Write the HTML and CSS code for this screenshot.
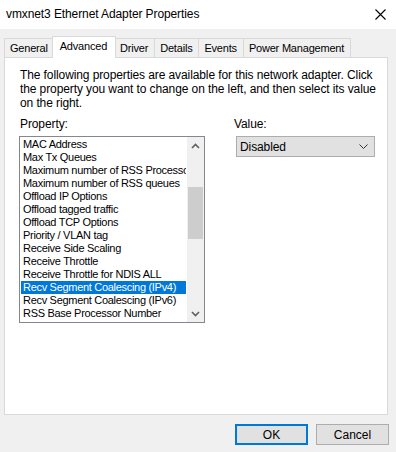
FILE: index.html
```html
<!DOCTYPE html>
<html lang="en">

<head>
    <meta charset="UTF-8">
    <meta name="viewport" content="width=device-width, initial-scale=1.0">
    <title>vmxnet3 Ethernet Adapter Properties</title>
    <link rel="stylesheet" href="styles.css">
</head>

<body>
    <div class="window">
        <div class="titlebar">
            <span class="title">vmxnet3 Ethernet Adapter Properties</span>
            <svg class="close" width="11" height="11" viewBox="0 0 11 11">
                <path d="M0.5 0.5 L10.5 10.5 M10.5 0.5 L0.5 10.5" stroke="#000" stroke-width="1.1" fill="none" />
            </svg>
        </div>

        <div class="tabs">
            <div class="tab">General</div>
            <div class="tab active">Advanced</div>
            <div class="tab">Driver</div>
            <div class="tab">Details</div>
            <div class="tab">Events</div>
            <div class="tab">Power Management</div>
        </div>

        <div class="panel">
            <p class="intro">
                The following properties are available for this network adapter. Click<br>
                the property you want to change on the left, and then select its value<br>
                on the right.
            </p>

            <div class="fields">
                <div class="field">
                    <div class="label">Property:</div>
                    <div class="listbox">
                        <ul class="items">
                            <li>MAC Address</li>
                            <li>Max Tx Queues</li>
                            <li>Maximum number of RSS Processors</li>
                            <li>Maximum number of RSS queues</li>
                            <li>Offload IP Options</li>
                            <li>Offload tagged traffic</li>
                            <li>Offload TCP Options</li>
                            <li>Priority / VLAN tag</li>
                            <li>Receive Side Scaling</li>
                            <li>Receive Throttle</li>
                            <li>Receive Throttle for NDIS ALL</li>
                            <li class="selected">Recv Segment Coalescing (IPv4)</li>
                            <li>Recv Segment Coalescing (IPv6)</li>
                            <li>RSS Base Processor Number</li>
                        </ul>
                        <div class="scrollbar">
                            <div class="arrow">
                                <svg width="9" height="6" viewBox="0 0 9 6">
                                    <path d="M1 5 L4.5 1.5 L8 5" stroke="#606060" stroke-width="1.6" fill="none" />
                                </svg>
                            </div>
                            <div class="track">
                                <div class="thumb"></div>
                            </div>
                            <div class="arrow">
                                <svg width="9" height="6" viewBox="0 0 9 6">
                                    <path d="M1 1 L4.5 4.5 L8 1" stroke="#606060" stroke-width="1.6" fill="none" />
                                </svg>
                            </div>
                        </div>
                    </div>
                </div>

                <div class="field">
                    <div class="label">Value:</div>
                    <div class="combo">
                        <span>Disabled</span>
                        <svg width="9" height="5" viewBox="0 0 9 5">
                            <path d="M0.5 0.5 L4.5 4.5 L8.5 0.5" stroke="#333" stroke-width="1" fill="none" />
                        </svg>
                    </div>
                </div>
            </div>
        </div>

        <div class="buttons">
            <button class="btn default">OK</button>
            <button class="btn">Cancel</button>
        </div>
    </div>
</body>

</html>
```

FILE: styles.css
```css
body {
    margin: 0;
    background-color: #f0f0f0;
    font-family: "Liberation Sans", Arial, sans-serif;
    font-size: 12px;
    letter-spacing: -0.1px;
    color: #000;
}

.window {
    width: 396px;
    height: 452px;
    overflow: hidden;
}

.titlebar {
    height: 29px;
    background-color: #fff;
    display: flex;
    align-items: center;
    justify-content: space-between;
    padding: 0 10px 0 6px;
}

.title {
    padding-bottom: 1px;
}

.tabs {
    display: flex;
    align-items: flex-end;
    padding: 7px 0 0 4px;
    height: 21px;
}

.tab {
    height: 18px;
    line-height: 19px;
    padding: 0 6px 0 5px;
    border: 1px solid #d9d9d9;
    border-bottom: none;
    margin-right: -1px;
    background-color: #f0f0f0;
    font-size: 11px;
    letter-spacing: -0.2px;
}

.tab.active {
    position: relative;
    z-index: 1;
    height: 21px;
    line-height: 18px;
    margin: 0 -2px -1px -2px;
    padding: 0 8px 0 7px;
    background-color: #fff;
}

.panel {
    margin-left: 4px;
    width: 367px;
    height: 346px;
    border: 1px solid #d9d9d9;
    background-color: #fff;
    padding: 10px 0 0 15px;
}

.intro {
    margin: 0;
    line-height: 14px;
}

.fields {
    display: grid;
    grid-template-columns: 185px 141px;
    column-gap: 29px;
    margin-top: 7px;
}

.label {
    line-height: 14px;
    margin-bottom: 5px;
}

.listbox {
    display: flex;
    width: 184px;
    height: 185px;
    margin-left: -1px;
    border: 1px solid #828790;
    background-color: #fff;
}

.items {
    list-style: none;
    margin: 0;
    padding: 1px 1px 0 1px;
    flex: 1;
    min-width: 0;
    overflow: hidden;
    font-size: 11px;
    letter-spacing: -0.3px;
}

.items li {
    height: 13px;
    line-height: 13px;
    padding-left: 2px;
    white-space: nowrap;
    overflow: hidden;
}

.items li.selected {
    background-color: #0078d7;
    color: #fff;
}

.scrollbar {
    width: 17px;
    display: flex;
    flex-direction: column;
    background-color: #f0f0f0;
}

.arrow {
    height: 17px;
    display: flex;
    align-items: center;
    justify-content: center;
}

.track {
    flex: 1;
    padding-top: 33px;
}

.thumb {
    height: 52px;
    margin: 0 1px;
    background-color: #cdcdcd;
}

.combo {
    height: 19px;
    margin-left: 2px;
    border: 1px solid #adadad;
    background-color: #e1e1e1;
    display: flex;
    align-items: center;
    justify-content: space-between;
    padding: 0 6px 0 3px;
}

.buttons {
    display: flex;
    justify-content: flex-end;
    gap: 8px;
    padding: 9px 7px 0 0;
}

.btn {
    width: 73px;
    height: 21px;
    border: 1px solid #adadad;
    background-color: #e1e1e1;
    font-family: "Liberation Sans", Arial, sans-serif;
    font-size: 12px;
    color: #000;
    padding: 0;
}

.btn.default {
    border: 2px solid #0078d7;
}
```
